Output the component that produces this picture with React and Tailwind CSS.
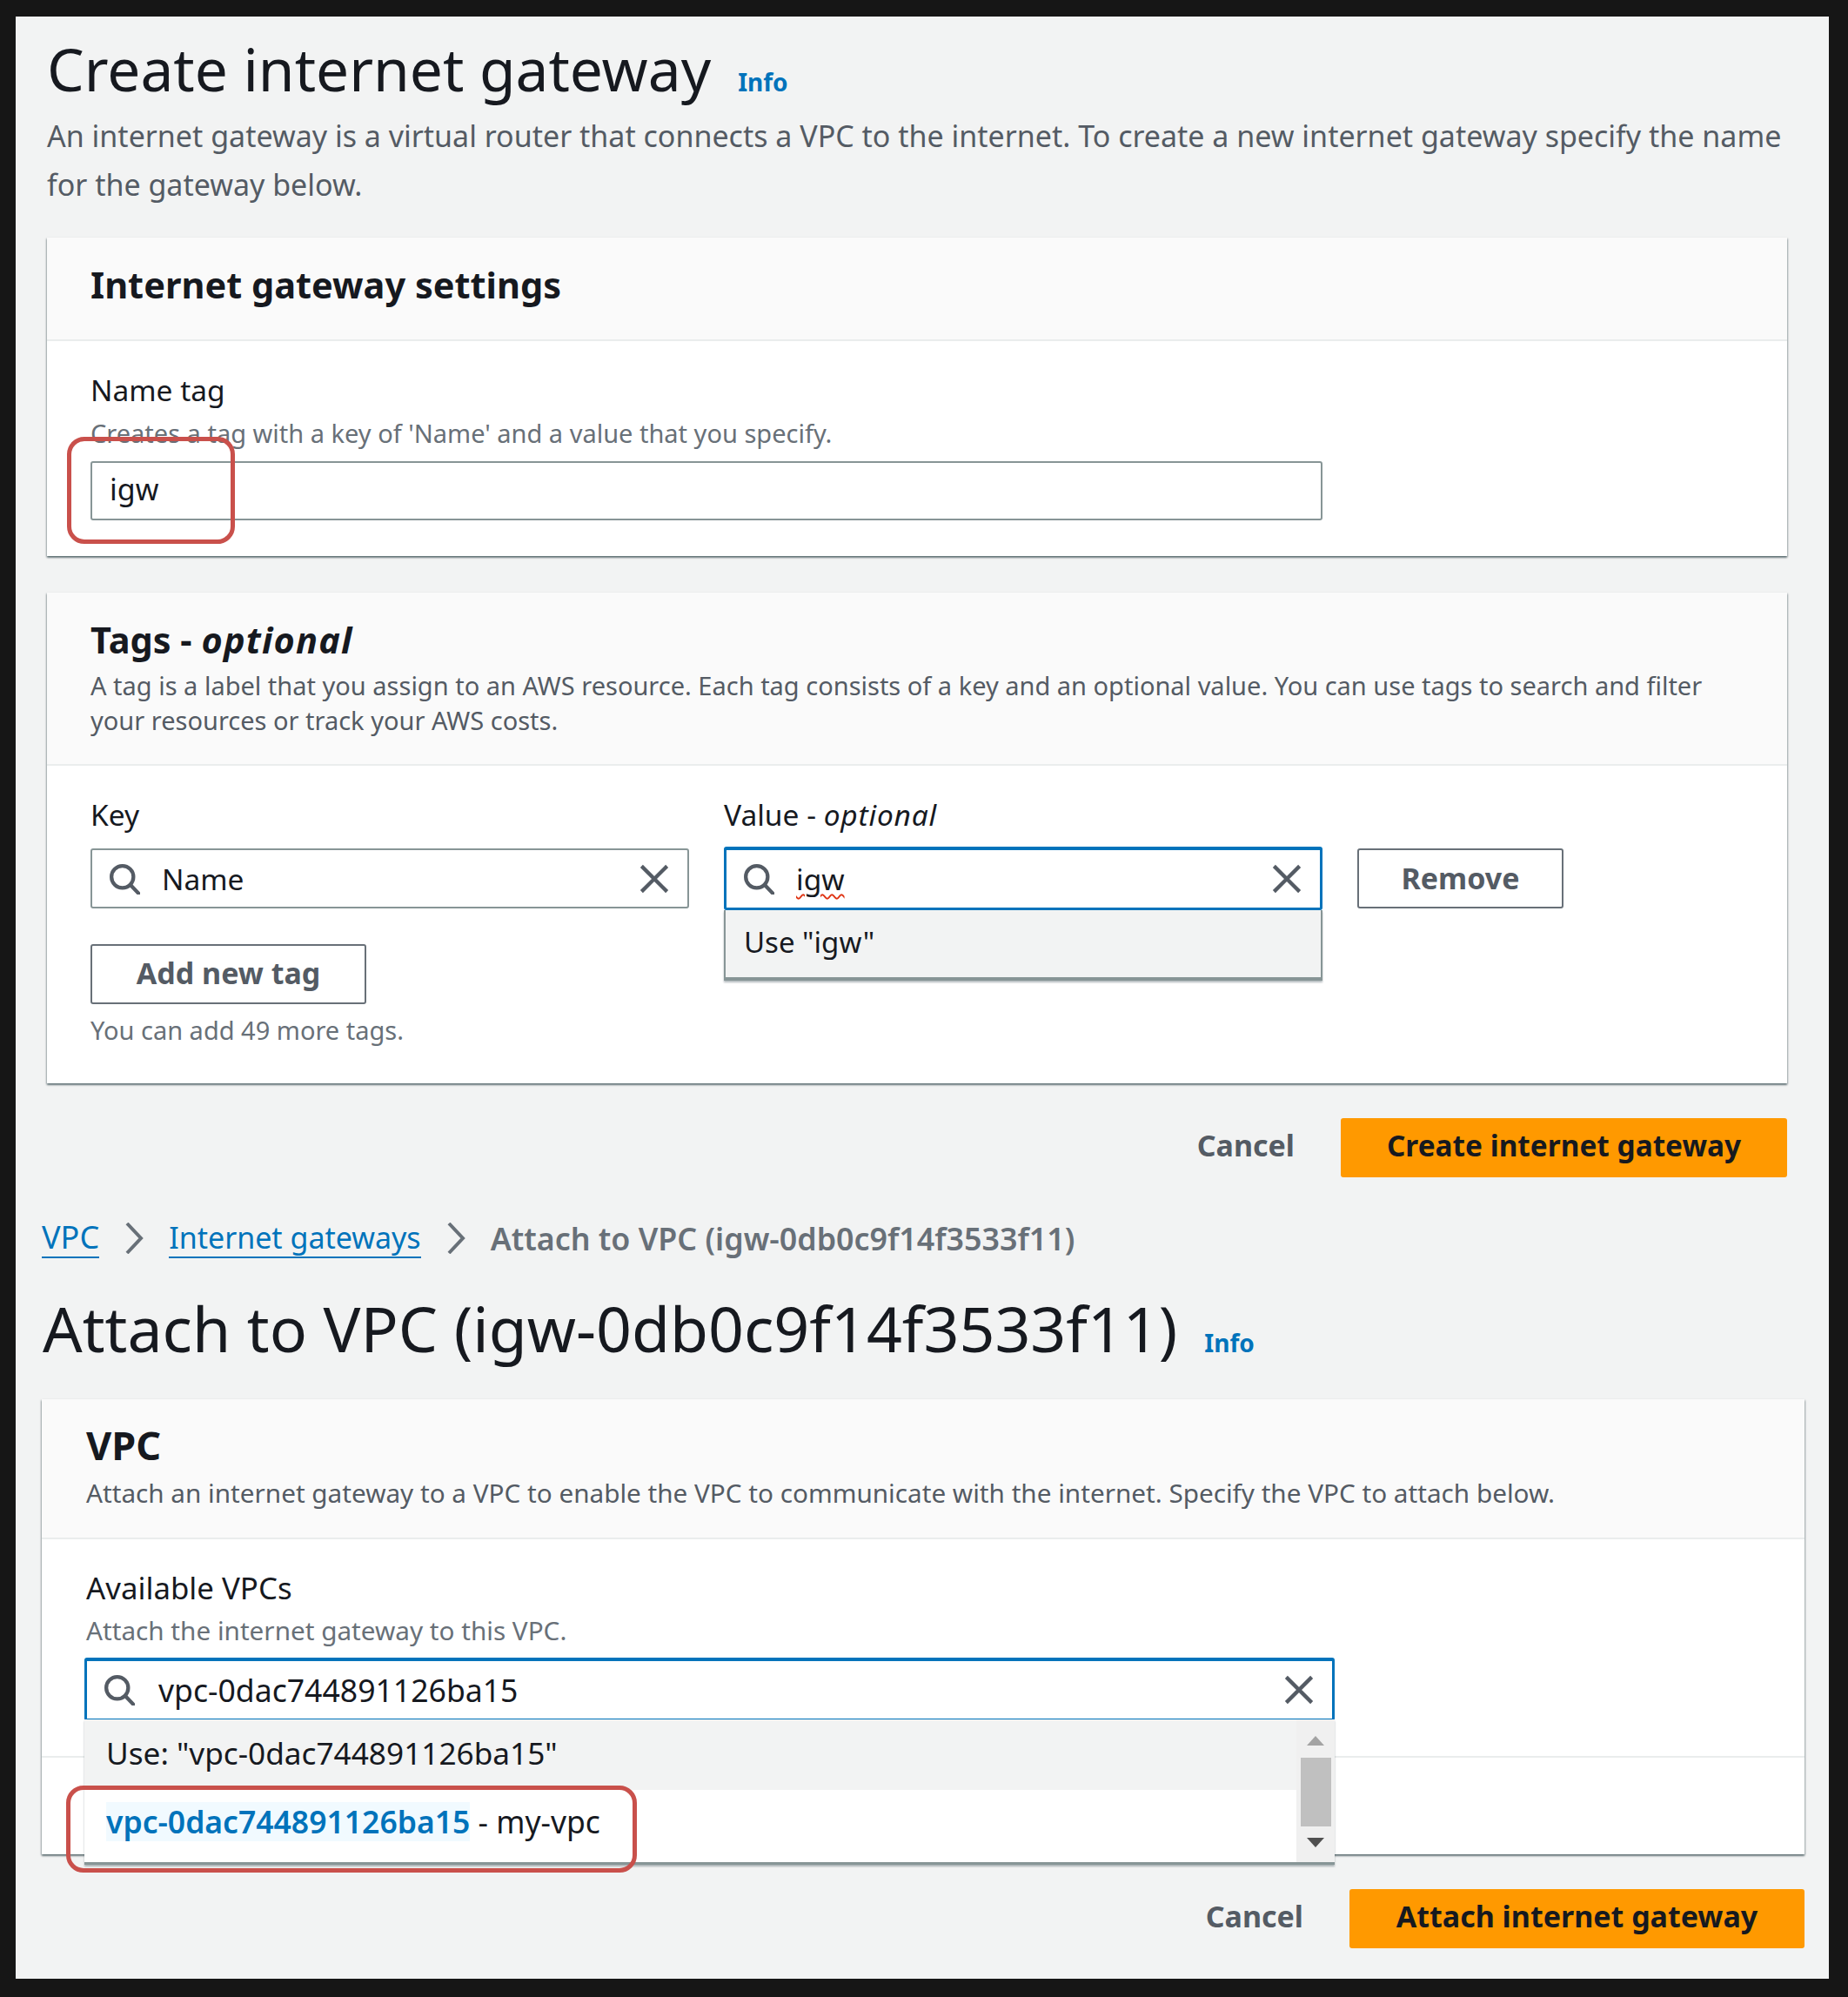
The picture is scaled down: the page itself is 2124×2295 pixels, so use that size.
import { Fragment } from "react";

function SearchIcon({ className = "" }) {
  return (
    <svg viewBox="0 0 16 16" className={`h-[36px] w-[36px] shrink-0 ${className}`} fill="none" stroke="#545b64" strokeWidth="1.9">
      <circle cx="7" cy="7" r="5.6" />
      <path d="M11 11l4.4 4.6" strokeLinecap="round" />
    </svg>
  );
}

function CloseIcon({ className = "" }) {
  return (
    <svg viewBox="0 0 16 16" className={`h-[36px] w-[36px] shrink-0 ${className}`} fill="none" stroke="#545b64" strokeWidth="1.9">
      <path d="M1.5 1.5l13 13M14.5 1.5l-13 13" />
    </svg>
  );
}

function Chevron() {
  return (
    <svg viewBox="0 0 22 36" className="h-[36px] w-[22px] shrink-0" fill="none" stroke="#687078" strokeWidth="4">
      <path d="M3 1l16 17L3 35" />
    </svg>
  );
}

function Card({ className = "", children }) {
  return (
    <section className={`bg-white shadow-[0_2px_2px_0_rgba(0,28,36,0.45),1px_1px_2px_0_rgba(0,28,36,0.2),-1px_1px_2px_0_rgba(0,28,36,0.2)] ${className}`}>
      {children}
    </section>
  );
}

function SearchField({ value, focused, squiggle, textClass = "ml-[25px] text-[33.5px]" }) {
  const ring = focused
    ? "border-[3px] border-t-4 border-[#0073bb] -my-[2px] h-[73px]"
    : "border-2 border-[#879596] h-[69px]";
  return (
    <div className={`flex items-center rounded-[3px] bg-white pl-[19px] pr-[20px] ${ring}`}>
      <SearchIcon />
      <span className={`flex-1 leading-[40px] text-[#16191f] ${textClass}`}>
        {squiggle ? <span className="underline decoration-wavy decoration-[#df3312] decoration-2 underline-offset-4">{value}</span> : value}
      </span>
      <CloseIcon />
    </div>
  );
}

function Footer({ label, className = "", widthClass, textClass }) {
  return (
    <div className={`flex items-center justify-end ${className}`}>
      <span className="pb-[6px] text-[34px] font-bold leading-[44px] text-[#545b64]">Cancel</span>
      <button className={`ml-[53px] flex h-[68px] items-center justify-center rounded-[3px] bg-[#ff9900] pb-[6px] font-bold leading-[44px] text-[#16191f] ${textClass} ${widthClass}`}>
        {label}
      </button>
    </div>
  );
}

export default function App() {
  return (
    <div className="h-[2295px] w-[2124px] bg-[#161616] pb-[21px] pl-[18px] pr-[22px] pt-[19px] font-['Noto_Sans',sans-serif]">
      <div className="relative h-full bg-[#f2f3f3]">
        {/* first screenshot */}
        <div className="pl-[36px] pr-[48px] pt-[20px]">
          <div className="flex items-baseline">
            <h1 className="text-[67.6px] font-normal leading-[80px] text-[#16191f]">Create internet gateway</h1>
            <a className="ml-[31px] text-[28px] font-bold text-[#0073bb]">Info</a>
          </div>
          <p className="mt-[10px] text-[34px] leading-[55.5px] text-[#545b64]">
            An internet gateway is a virtual router that connects a VPC to the internet. To create a new internet gateway specify the name for the gateway below.
          </p>

          <Card className="mt-[33px]">
            <div className="h-[119px] border-b-2 border-[#eaeded] bg-[#fafafa] px-[50px] pt-[28px]">
              <h2 className="text-[41.5px] font-bold leading-[52px] text-[#16191f]">Internet gateway settings</h2>
            </div>
            <div className="px-[50px] pb-[41px] pt-[36px]">
              <div className="text-[33.5px] leading-[40px] text-[#16191f]">Name tag</div>
              <div className="mt-[10px] text-[29px] leading-[40px] text-[#687078]">Creates a tag with a key of 'Name' and a value that you specify.</div>
              <div className="mt-[12px] flex h-[68px] w-[1416px] items-center rounded-[3px] border-2 border-[#879596] bg-white pb-[3px] pl-[20px] text-[34px] text-[#16191f]">igw</div>
            </div>
          </Card>

          <Card className="mt-[42px]">
            <div className="h-[199px] border-b-2 border-[#eaeded] bg-[#fafafa] px-[50px] pt-[28px]">
              <h2 className="text-[41.5px] font-bold leading-[52px] text-[#16191f]">
                Tags - <i className="font-bold tracking-[1.2px]">optional</i>
              </h2>
              <p className="mt-[7px] text-[29px] leading-[40px] text-[#545b64]">
                A tag is a label that you assign to an AWS resource. Each tag consists of a key and an optional value. You can use tags to search and filter your resources or track your AWS costs.
              </p>
            </div>
            <div className="px-[50px] pb-[41px] pt-[36px]">
              <div className="flex gap-[40px]">
                <div className="w-[688px]">
                  <div className="text-[33.5px] leading-[40px] text-[#16191f]">Key</div>
                  <div className="mt-[19px]"><SearchField value="Name" /></div>
                </div>
                <div className="relative w-[688px]">
                  <div className="text-[33.5px] leading-[40px] text-[#16191f]">Value - <i className="tracking-[0.8px]">optional</i></div>
                  <div className="mt-[19px]"><SearchField value="igw" focused squiggle /></div>
                  <div className="absolute left-0 right-0 top-[130px] h-[81px] border-x-2 border-b-4 border-[#879596] bg-[#f2f3f3] pl-[21px] pt-[17px] text-[33px] leading-[40px] text-[#16191f] shadow-[0_2px_2px_0_rgba(0,28,36,0.3)]">
                    Use "igw"
                  </div>
                </div>
                <button className="mt-[59px] flex h-[69px] w-[237px] items-center justify-center rounded-[3px] border-2 border-[#687078] pb-[1px] text-[34px] font-bold text-[#545b64]">
                  Remove
                </button>
              </div>
              <button className="mt-[41px] flex h-[69px] w-[317px] items-center justify-center rounded-[3px] border-2 border-[#687078] pb-[2px] text-[34px] font-bold text-[#545b64]">
                Add new tag
              </button>
              <div className="mt-[10px] text-[29px] leading-[40px] text-[#687078]">You can add 49 more tags.</div>
            </div>
          </Card>

          <Footer label="Create internet gateway" className="mt-[40px]" widthClass="w-[513px]" textClass="text-[33.4px]" />
        </div>

        {/* second screenshot */}
        <div className="pl-[30px] pr-[28px] pt-[48px]">
          <nav className="flex h-[44px] items-center text-[34px] leading-[44px]">
            {[
              ["VPC", "text-[36px]"],
              ["Internet gateways", "text-[34px]"],
            ].map(([name, size]) => (
              <Fragment key={name}>
                <a className={`whitespace-nowrap border-b-2 border-[#0073bb] text-[#0073bb] ${size}`}>{name}</a>
                <span className="mx-[29px]"><Chevron /></span>
              </Fragment>
            ))}
            <span className="whitespace-nowrap text-[35.8px] font-semibold text-[#687078]">Attach to VPC (igw-0db0c9f14f3533f11)</span>
          </nav>
          <div className="mt-[41px] flex items-baseline pl-[1px]">
            <h1 className="text-[71.6px] font-normal leading-[80px] text-[#16191f]">Attach to VPC (igw-0db0c9f14f3533f11)</h1>
            <a className="ml-[31px] text-[28px] font-bold text-[#0073bb]">Info</a>
          </div>

          <Card className="mt-[42px]">
            <div className="h-[161px] border-b-2 border-[#eaeded] bg-[#fafafa] px-[51px] pt-[27px]">
              <h2 className="text-[45px] font-bold leading-[52px] text-[#16191f]">VPC</h2>
              <p className="mt-[9px] text-[29.7px] leading-[40px] text-[#545b64]">
                Attach an internet gateway to a VPC to enable the VPC to communicate with the internet. Specify the VPC to attach below.
              </p>
            </div>
            <div className="h-[251px] border-b-2 border-[#eaeded] pl-[51px] pt-[36px]">
              <div className="text-[34.8px] leading-[40px] text-[#16191f]">Available VPCs</div>
              <div className="mt-[9px] text-[29.7px] leading-[40px] text-[#687078]">Attach the internet gateway to this VPC.</div>
              <div className="relative -ml-[2px] mt-[13px] w-[1437px]">
                <SearchField value="vpc-0dac744891126ba15" focused textClass="ml-[27px] text-[35.6px]" />
                <div className="absolute left-0 right-0 top-[71px] flex h-[167px] border-b-[3px] border-[#879596] bg-white shadow-[0_2px_2px_0_rgba(0,28,36,0.3)]">
                  <div className="flex-1">
                    <div className="h-[81px] bg-[#f2f3f3] pl-[25px] pt-[18px] text-[35.2px] leading-[40px] text-[#16191f]">
                      Use: "vpc-0dac744891126ba15"
                    </div>
                    <div className="pl-[25px] pt-[14px] text-[35.5px] leading-[45px] text-[#16191f]">
                      <span className="inline-block bg-[#f1faff] font-semibold text-[#0073bb]">vpc-0dac744891126ba15</span>
                      <span> - my-vpc</span>
                    </div>
                  </div>
                  <div className="flex w-[44px] flex-col items-center bg-[#f0f0f0] pt-[19px]">
                    <svg viewBox="0 0 20 11" className="h-[11px] w-[20px]" fill="#a3a3a3"><path d="M10 0l10 11H0z" /></svg>
                    <div className="mt-[14px] h-[79px] w-[35px] bg-[#c0c0c0]" />
                    <svg viewBox="0 0 20 11" className="mt-[13px] h-[11px] w-[20px]" fill="#505050"><path d="M0 0h20L10 11z" /></svg>
                  </div>
                </div>
              </div>
            </div>
            <div className="h-[111px]" />
          </Card>

          <Footer label="Attach internet gateway" className="mt-[40px]" widthClass="w-[523px]" textClass="text-[34px]" />
        </div>

        {/* red annotations on top of the capture */}
        <div className="absolute left-[59px] top-[483px] h-[123px] w-[193px] rounded-[20px] border-[5px] border-[#c9504b]" />
        <div className="absolute left-[58px] top-[2033px] h-[100px] w-[656px] rounded-[20px] border-[5px] border-[#c9504b]" />
      </div>
    </div>
  );
}
